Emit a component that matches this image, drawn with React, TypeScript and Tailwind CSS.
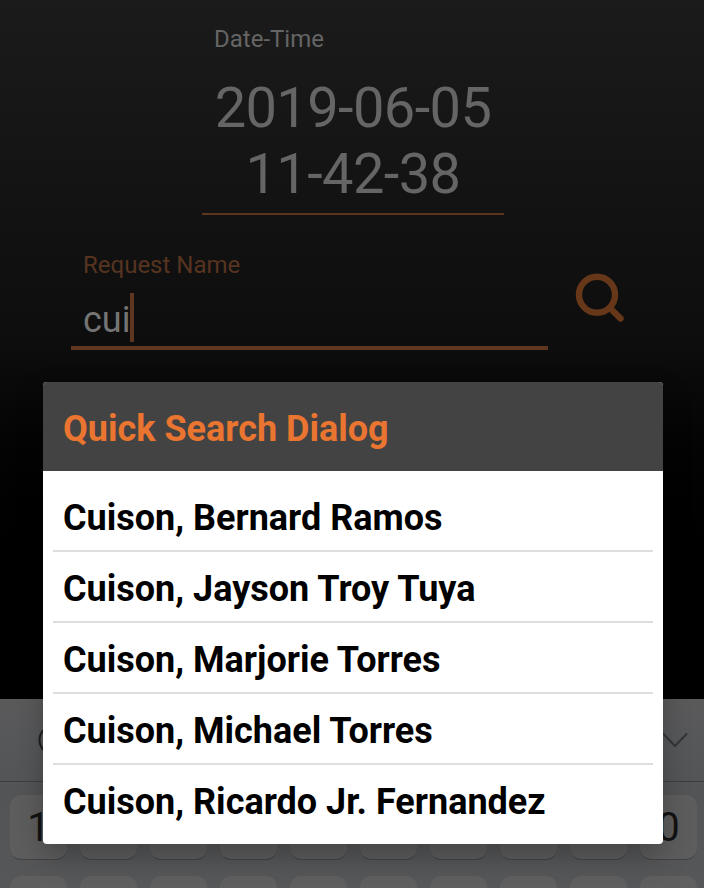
const NAMES = [
  'Cuison, Bernard Ramos',
  'Cuison, Jayson Troy Tuya',
  'Cuison, Marjorie Torres',
  'Cuison, Michael Torres',
  'Cuison, Ricardo Jr. Fernandez',
];

// Only the outermost number keys stay visible beside the dialog.
const KEYS = ['1', '', '', '', '', '', '', '', '', '0'];

function RequestForm() {
  return (
    <section className="flex h-[699px] flex-col bg-linear-to-b from-[#1b1b1b] from-0% via-[#0d0d0d] via-50% to-black to-90%">
      <div className="ml-[202px] flex h-[215px] w-[302px] flex-col border-b-2 border-[#5c351e] px-3 pt-[25px] text-[#656565]">
        <label className="text-2xl leading-7">Date-Time</label>
        <div className="-mx-3 mt-[22px] text-center text-[56px] leading-[66px] tracking-[-0.6px]">
          <div>2019-06-05</div>
          <div>11-42-38</div>
        </div>
      </div>
      <div className="mt-[36px] flex pl-[71px]">
        <div className="flex h-[99px] w-[477px] flex-col border-b-4 border-[#5f3620] pl-3">
          <label className="text-2xl leading-7 text-[#573420]">Request Name</label>
          <div className="mt-[14px] flex h-[49px] items-center">
            <span className="pt-[5px] text-4xl leading-[44px] text-[#747474]">cui</span>
            <span className="h-[49px] w-1 bg-[#5f3620]" />
          </div>
        </div>
        <svg className="ml-[26px] mt-[21px] size-[52px]" viewBox="0 0 52 52" fill="none" stroke="#673719" strokeWidth="6.4" strokeLinecap="round">
          <circle cx="23" cy="22.8" r="18" />
          <path d="M36 36L46.5 46.5" />
        </svg>
      </div>
    </section>
  );
}

function Keyboard() {
  return (
    <section className="h-[189px] bg-linear-to-b from-[#5a5a5b] via-[#525456] to-[#565758]">
      <div className="flex h-[83px] items-center justify-between border-b border-[#3d3e3f] pl-[38px] pr-4">
        <svg className="size-8" viewBox="0 0 32 32" fill="none" stroke="#1e1e1e" strokeWidth="2">
          <circle cx="16" cy="16" r="14.5" />
        </svg>
        <svg className="h-4 w-[26px]" viewBox="0 0 26 16" fill="none" stroke="#343536" strokeWidth="2">
          <path d="M1 1.5L13 14L25 1.5" />
        </svg>
      </div>
      <div className="flex gap-[13px] pl-[10px] pt-[13px]">
        {KEYS.map((key, index) => (
          <div key={index} className="flex h-[65px] w-[57px] shrink-0 items-center justify-center rounded-[11px] border-b border-[#424344] bg-[#5d5d5d] pt-0.5 text-[40px] leading-none text-[#121212]">
            {key}
          </div>
        ))}
      </div>
      <div className="mt-4 flex h-[12px] gap-[13px] overflow-hidden pl-[10px]">
        {KEYS.map((_, index) => (
          <div key={index} className="h-[65px] w-[57px] shrink-0 rounded-[11px] bg-[#5f5f5f]" />
        ))}
      </div>
    </section>
  );
}

function SearchDialog() {
  return (
    <div className="absolute left-[43px] top-[382px] h-[462px] w-[620px] rounded-[4px] font-bold text-black shadow-[0_12px_28px_rgba(0,0,0,0.25)]">
      <div className="h-full overflow-hidden rounded-[4px] bg-white">
        <h1 className="flex h-[89px] items-center bg-[#434343] pl-5 pt-[5px] text-4xl text-[#e97530]">Quick Search Dialog</h1>
        <ul className="px-[10px] pt-[10px]">
          {NAMES.map((name) => (
            <li key={name} className="flex h-[71px] items-center border-b-2 border-[#dedede] pl-[10px] pt-[5px] text-4xl last:border-transparent">
              {name}
            </li>
          ))}
        </ul>
      </div>
    </div>
  );
}

export default function App() {
  return (
    <main className="relative h-[888px] w-[704px] overflow-hidden font-['Roboto',sans-serif]">
      <RequestForm />
      <Keyboard />
      <SearchDialog />
    </main>
  );
}
